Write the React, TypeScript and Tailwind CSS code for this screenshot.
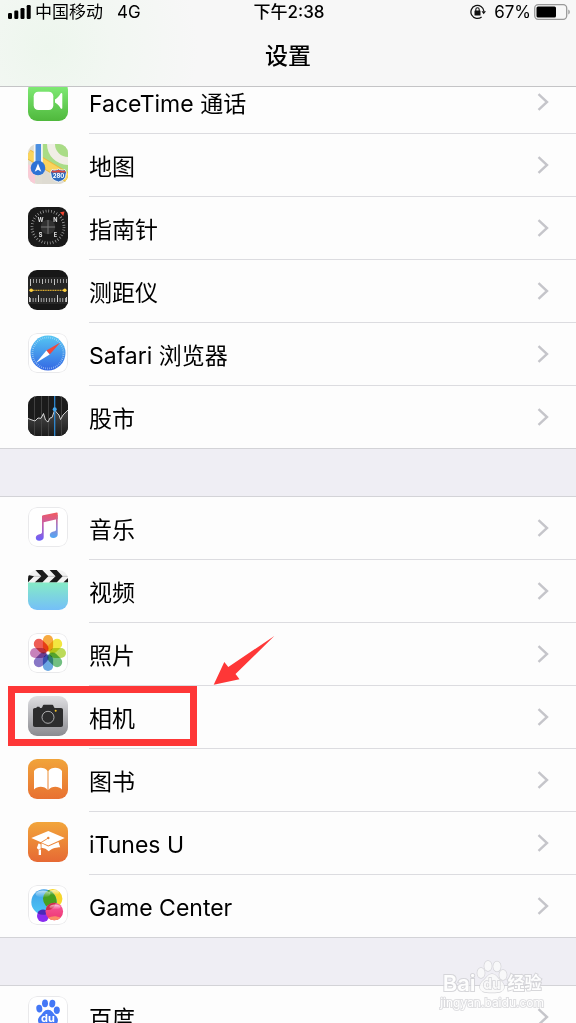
import React from 'react';

function Tile({ children, outlined }: { children: React.ReactNode; outlined?: boolean }) {
    return (
        <span className={`relative block w-10 h-10 shrink-0 rounded-[9px] overflow-hidden ${outlined ? 'bg-white' : ''}`}>
            <svg className="block w-10 h-10" viewBox="0 0 40 40" fill="none" aria-hidden="true">
                {children}
                {outlined && <rect x="0.5" y="0.5" width="39" height="39" rx="8.5" stroke="#e9e9eb" />}
            </svg>
        </span>
    );
}

function Gradient({ id, from, to }: { id: string; from: string; to: string }) {
    return (
        <linearGradient id={id} x1="0" y1="0" x2="0" y2="1">
            <stop stopColor={from} />
            <stop offset="1" stopColor={to} />
        </linearGradient>
    );
}

function FaceTimeIcon() {
    return (
        <Tile>
            <Gradient id="facetime" from="#86f17d" to="#4fb83c" />
            <rect width="40" height="40" fill="url(#facetime)" />
            <rect x="5.7" y="10.8" width="19.6" height="18.2" rx="4.5" fill="#fff" />
            <path d="M27 18.4c2.6-1.3 4.3-3.6 5.6-5.8.5-.9 1.7-.6 1.7.4v13.9c0 1-1.2 1.3-1.7.4-1.3-2.3-3-4.5-5.6-5.8z" fill="#fff" />
        </Tile>
    );
}

function MapsIcon() {
    return (
        <Tile>
            <rect width="40" height="40" fill="#e0ddd3" />
            <path d="M14 0h26v40L14 20z" fill="#a9dc86" />
            <circle cx="40" cy="0" r="17" stroke="#f0eee6" strokeWidth="8" />
            <path d="M0 20l7 5v15H0z" fill="#f9ccd6" />
            <path d="M0 10l42 25" stroke="#edb93e" strokeWidth="10" />
            <path d="M0 10l42 25" stroke="#fad45d" strokeWidth="8" />
            <path d="M14 25l20 15H14z" fill="#dedbd2" />
            <path d="M10.3 0v22" stroke="#f7f7f3" strokeWidth="9" />
            <path d="M10.3 0v22" stroke="#4c8fe0" strokeWidth="5.5" />
            <circle cx="10" cy="24" r="7.3" fill="#2e73d5" />
            <path d="M10 19.5l3.3 8.2-3.3-2-3.3 2z" fill="#fff" />
            <path d="M24 25.5c2 1 4 .8 6.5-.5 2.5 1.300 4.500 1.500 6.500.5l1.500 3c-1.500 4 .5 7-8 9.500-8.500-2.500-6.500-5.500-8-9.500z" fill="#2c69bd" stroke="#fff" strokeWidth=".8" />
            <path d="M24.200 26.200c2 1 4 .8 6.300-.4 2.300 1.200 4.300 1.400 6.300.4l.9 2.200H23.300z" fill="#d8483f" />
            <text x="30.5" y="34" textAnchor="middle" fontSize="6" fontWeight="700" fill="#fff" fontFamily="Inter, sans-serif">280</text>
        </Tile>
    );
}

function CompassIcon() {
    return (
        <Tile>
            <rect width="40" height="40" fill="#1a1a1a" />
            <circle cx="20" cy="20" r="16" stroke="#a8a8a8" strokeWidth="2.8" strokeDasharray=".7 2.09" />
            <circle cx="20" cy="20" r="7.3" fill="#303030" />
            <path d="M20 13v14M13 20h14" stroke="#777" />
            <path d="M32 5.3l4.500-.8-1.200 4.500z" fill="#f2452f" />
            <g fill="#e4e4e4" fontSize="5.5" fontWeight="700" fontFamily="Inter, sans-serif" textAnchor="middle">
                <text x="12.7" y="15">W</text>
                <text x="27.3" y="15">N</text>
                <text x="12.5" y="30">S</text>
                <text x="27.3" y="30">E</text>
            </g>
        </Tile>
    );
}

function MeasureIcon() {
    return (
        <Tile>
            <rect width="40" height="40" fill="#171717" />
            <rect y="7" width="40" height="27" fill="#262626" />
            <path d="M2.5 9v7M26.5 9v6M14.5 9v5" stroke="#ddd" strokeWidth=".9" />
            <path d="M5 11h34" stroke="#bbb" strokeWidth="4" strokeDasharray=".8 2.2" />
            <path d="M2 30h37" stroke="#ccc" strokeWidth="4" strokeDasharray=".8 1.9" />
            <path d="M10.5 25v7M29.5 25v7M1.5 27v5M38.5 27v5" stroke="#ddd" strokeWidth=".9" />
            <path d="M3 20.3h34" stroke="#d7a92f" strokeWidth="1.2" strokeDasharray="1.2 .5" />
            <circle cx="3.2" cy="20.3" r="1.8" fill="#ffd23e" />
            <circle cx="36.8" cy="20.3" r="1.8" fill="#ffd23e" />
        </Tile>
    );
}

function SafariIcon() {
    return (
        <Tile outlined>
            <Gradient id="safari" from="#55c6f3" to="#3467e4" />
            <circle cx="20" cy="20" r="17.5" fill="url(#safari)" />
            <circle cx="20" cy="20" r="15.5" stroke="#cfe9fb" strokeOpacity=".75" strokeWidth="1.8" strokeDasharray=".6 1.43" />
            <path d="M32.3 9.5L18.4 17.6l3.3 4z" fill="#f0483e" />
            <path d="M7.9 30L18.4 17.6l3.3 4z" fill="#fff" />
        </Tile>
    );
}

function StocksIcon() {
    return (
        <Tile>
            <Gradient id="stocks" from="#4a4a4a" to="#1b1b1b" />
            <rect width="40" height="40" fill="#1b1b1b" />
            <path d="M0 22.5L4 24l3 1 3-3 3 .3 2.5-4.8 2 6.5 2.5 2 2-4 2-.5 2.7-7.5 2.3 3 2 2 1.500 4.500L35 19l5-5v26H0z" fill="url(#stocks)" />
            <path d="M6.5 0v40M13.5 0v40M20.5 0v40M33.5 0v40" stroke="#4a4a4a" strokeWidth=".8" />
            <path d="M0 22.5L4 24l3 1 3-3 3 .3 2.5-4.8 2 6.5 2.5 2 2-4 2-.5 2.7-7.5 2.3 3 2 2 1.500 4.500L35 19l5-5" stroke="#e3e3e3" strokeWidth=".9" />
            <path d="M26.7 0v40" stroke="#2f8fdd" strokeWidth="1.2" />
            <circle cx="26.7" cy="13.3" r="2" fill="#46a8f0" />
        </Tile>
    );
}

function MusicIcon() {
    return (
        <Tile outlined>
            <linearGradient id="music" gradientUnits="userSpaceOnUse" x1="23" y1="6" x2="19" y2="34">
                <stop stopColor="#f05a63" />
                <stop offset=".45" stopColor="#c45fae" />
                <stop offset="1" stopColor="#6d60f8" />
            </linearGradient>
            <linearGradient id="musicRight" gradientUnits="userSpaceOnUse" x1="28" y1="6" x2="26" y2="31">
                <stop stopColor="#f05a63" />
                <stop offset=".5" stopColor="#a27cc9" />
                <stop offset="1" stopColor="#4fa8f5" />
            </linearGradient>
            <path d="M14 9.5c0-.7.3-1 1-1.2l13.7-2.7c.7-.1 1 .2 1 .8V12l-14 3.3v15c0 2.2-2 3.5-4.6 3.5-2 0-3.3-1.2-3.3-3 0-2 1.5-3.2 3.7-3.6 1.7-.3 2.5-.7 2.5-2z" fill="url(#music)" />
            <path d="M28 8h1.7v19.5c0 2.1-1.9 3.4-4.4 3.4-2.1 0-3.5-1.1-3.5-3 0-2 1.5-3.1 3.7-3.5 1.7-.3 2.5-.7 2.5-2z" fill="url(#musicRight)" />
        </Tile>
    );
}

function VideosIcon() {
    return (
        <Tile>
            <Gradient id="videos" from="#85ebc6" to="#74bff8" />
            <rect width="40" height="13" fill="#f1f1f1" />
            <path d="M0 6.3h40" stroke="#aaa" strokeWidth=".7" />
            <path d="M7.3 0h7l6 6.3-6 6.2H6.7l6.6-6.2zM21.6 0h7l6 6.3-6 6.2H21l6.6-6.2zM0 5l6 1.3-6 6zM35.3 12.5L40 8v4.5z" fill="#1a1a1a" />
            <rect y="12.5" width="40" height="27.5" fill="url(#videos)" />
        </Tile>
    );
}

const PETALS = ['#f6a12c', '#f2e32b', '#b5d748', '#63b873', '#5c9fe0', '#7b68c0', '#c274b4', '#ec4b43'];

function PhotosIcon() {
    return (
        <Tile outlined>
            {PETALS.map((color, i) => (
                <rect
                    key={color}
                    x="14.9"
                    y="2"
                    width="10.2"
                    height="16.6"
                    rx="5.1"
                    fill={color}
                    fillOpacity=".9"
                    transform={`rotate(${i * 45} 20 20)`}
                    className="mix-blend-multiply"
                />
            ))}
            <circle cx="20" cy="20" r="1.3" fill="#fff" />
        </Tile>
    );
}

function CameraIcon() {
    return (
        <Tile>
            <Gradient id="camera" from="#dfdfe2" to="#8b8b90" />
            <rect width="40" height="40" fill="url(#camera)" />
            <path d="M8.5 12v-.7c0-.4.3-.6.7-.6h1.9c.4 0 .7.2.7.6v.7h1c.8 0 1.2-.4 1.5-1.1l.5-1.2c.3-.7.7-1 1.5-1h7.6c.8 0 1.2.3 1.5 1l.5 1.2c.3.7.7 1.1 1.5 1.1H33c1.3 0 2 .7 2 2v15c0 1.3-.7 2-2 2H7c-1.3 0-2-.7-2-2V14c0-1.3.7-2 2-2z" fill="#2c2c2d" />
            <circle cx="20" cy="21.3" r="6" stroke="#b9b9bb" strokeWidth=".9" />
            <circle cx="27.7" cy="14.8" r="1" fill="#f4c026" />
        </Tile>
    );
}

function BooksIcon() {
    return (
        <Tile>
            <Gradient id="books" from="#f1a43a" to="#e87132" />
            <rect width="40" height="40" fill="url(#books)" />
            <path d="M6 12c1.5-2.2 4-3.2 6.7-3.2 2.8 0 5.5 1.2 6.8 3.2v19c-1.5-2.300-4-3.300-6.800-3.300-2.600 0-5 1-6.700 2.800zM34 12c-1.500-2.200-4-3.200-6.700-3.200-2.800 0-5.500 1.200-6.800 3.200v19c1.500-2.300 4-3.300 6.800-3.300 2.600 0 5 1 6.700 2.800z" fill="#fff" />
        </Tile>
    );
}

function ITunesUIcon() {
    return (
        <Tile>
            <Gradient id="itunesu" from="#f2a53b" to="#e66934" />
            <rect width="40" height="40" fill="url(#itunesu)" />
            <path d="M20.3 9L36.7 16 20.3 23.5 3.3 16z" fill="#fff" />
            <path d="M13.5 21.3l6.8 3.2 10.2-4.6 1.7 5.3c-3 .1-8 .8-11.500 4-2-2-4.200-3.200-7.200-3.500z" fill="#fff" />
            <path d="M20.3 16l-8.5 5.3V26" stroke="#ea8538" strokeWidth=".9" />
            <circle cx="20.3" cy="16" r="1.2" fill="#ea8538" />
            <path d="M10.5 21.5l2 .5.3 4.5-2.5 1-1.5-1.5zM10.700 27.500h2.300V33h-2.300z" fill="#fff" />
        </Tile>
    );
}

function GameCenterIcon() {
    return (
        <Tile outlined>
            <Gradient id="gcBlue" from="#3f9fe6" to="#4cc8f7" />
            <Gradient id="gcPink" from="#f55b9d" to="#ef3470" />
            <Gradient id="gcShine" from="#ffffffaa" to="#ffffff00" />
            <clipPath id="gcOverlap">
                <circle cx="16" cy="17" r="12.7" />
            </clipPath>
            <circle cx="24.7" cy="13.8" r="9.7" fill="#f6d62c" />
            <circle cx="16" cy="17" r="12.7" fill="url(#gcBlue)" />
            <circle cx="24.7" cy="13.8" r="9.7" fill="#47a01f" clipPath="url(#gcOverlap)" />
            <circle cx="15" cy="31" r="6" fill="#8a2cf0" />
            <path d="M9.5 28.2a6 6 0 0 1 11 0c-3.5 2-7.5 2-11 0z" fill="#4a28b8" />
            <circle cx="26.3" cy="26.5" r="8.8" fill="url(#gcPink)" />
            <path d="M20 32.7a8.800 8.800 0 0 0 12.600 0c-4-2-8.600-2-12.600 0z" fill="#fb8a68" />
            <path d="M17.700 25a8.800 8.800 0 0 1 10-7.200c-.5 4-4 8-10 7.200z" fill="#cf2b4c" />
            <ellipse cx="15" cy="9" rx="7.5" ry="3.5" fill="url(#gcShine)" />
            <ellipse cx="26" cy="7.5" rx="5" ry="2.5" fill="url(#gcShine)" />
            <ellipse cx="27" cy="22" rx="5.5" ry="2.5" fill="url(#gcShine)" />
        </Tile>
    );
}

function BaiduIcon() {
    return (
        <Tile outlined>
            <g fill="#4478f6">
                <ellipse cx="11.3" cy="12.7" rx="3" ry="3.9" transform="rotate(-8 11.3 12.7)" />
                <ellipse cx="17" cy="7.3" rx="3" ry="3.9" />
                <ellipse cx="24.3" cy="7.6" rx="3" ry="3.9" transform="rotate(8 24.3 7.6)" />
                <ellipse cx="28.8" cy="14.3" rx="3" ry="3.7" />
                <path d="M20 13.7c4 0 5 3.300 7.300 5.600 1.900 1.900 3 3.400 2.500 6-.5 3-3 4.500-9.800 4.500s-9.500-1.500-9.900-4.500c-.4-2.600.8-4.100 2.700-6 2.300-2.300 3.200-5.600 7.200-5.600z" />
            </g>
            <text x="20" y="26" textAnchor="middle" fontSize="11" fontWeight="700" fill="#fff" fontFamily="Inter, sans-serif">du</text>
        </Tile>
    );
}

function SignalBars() {
    return (
        <svg className="w-6 h-4" viewBox="0 0 24 16" fill="#000" aria-label="信号">
            <rect x="0" y="9" width="4" height="6" rx="1.2" />
            <rect x="6.3" y="6.5" width="4" height="8.5" rx="1.2" />
            <rect x="12.5" y="4" width="4" height="11" rx="1.2" />
            <rect x="18.7" y="1" width="4" height="14" rx="1.2" />
        </svg>
    );
}

function RotationLock() {
    return (
        <svg className="w-4 h-4" viewBox="0 0 16 16" fill="none" aria-label="方向锁定">
            <path d="M11.6 12.9A6.5 6.5 0 1 1 13.9 7.3" stroke="#111" strokeWidth="1.3" />
            <path d="M11.5 7.3H16l-2.3 2.9z" fill="#111" />
            <rect x="4.5" y="6.6" width="6" height="4.8" rx=".5" fill="#111" />
            <path d="M5.8 7V5.5a1.7 1.7 0 0 1 3.4 0V7" stroke="#111" strokeWidth="1.1" />
        </svg>
    );
}

function Battery() {
    return (
        <svg className="w-9 h-4" viewBox="0 0 36 16" fill="none" aria-label="电池">
            <rect x=".7" y=".7" width="32" height="14.6" rx="3.5" stroke="#999" strokeWidth="1.3" />
            <rect x="2.5" y="2.5" width="19.5" height="11" rx="1.5" fill="#000" />
            <path d="M34.3 5.5c1 .4 1.5 1.3 1.5 2.5s-.5 2.1-1.5 2.5z" fill="#999" />
        </svg>
    );
}

type Item = { label: string; Icon: () => React.ReactElement; marked?: boolean };

const GROUPS: Item[][] = [
    [
        { label: 'FaceTime 通话', Icon: FaceTimeIcon },
        { label: '地图', Icon: MapsIcon },
        { label: '指南针', Icon: CompassIcon },
        { label: '测距仪', Icon: MeasureIcon },
        { label: 'Safari 浏览器', Icon: SafariIcon },
        { label: '股市', Icon: StocksIcon },
    ],
    [
        { label: '音乐', Icon: MusicIcon },
        { label: '视频', Icon: VideosIcon },
        { label: '照片', Icon: PhotosIcon },
        { label: '相机', Icon: CameraIcon, marked: true },
        { label: '图书', Icon: BooksIcon },
        { label: 'iTunes U', Icon: ITunesUIcon },
        { label: 'Game Center', Icon: GameCenterIcon },
    ],
    [{ label: '百度', Icon: BaiduIcon }],
];

function Row({ label, Icon, marked }: Item) {
    return (
        <li className="group relative">
            <a href="#" className="flex h-[63px] items-stretch pl-7">
                <span className="flex items-center pr-[21px] pb-1">
                    <Icon />
                </span>
                <span className="flex flex-1 items-center justify-between border-b border-[#dcdce0] pr-[27px] group-last:border-transparent">
                    <span className="pt-1 text-[23px] leading-8">{label}</span>
                    <svg className="w-3 h-[18px]" viewBox="0 0 12 18" fill="none" stroke="#c5c5ca" strokeWidth="2.4" aria-hidden="true">
                        <path d="M1.5 1.2L10 9l-8.5 7.8" />
                    </svg>
                </span>
            </a>
            {marked && (
                <>
                    <span className="absolute left-2 top-0 h-[60px] w-[189px] border-[7px] border-[#fe3737] pointer-events-none" />
                    <svg className="absolute left-[213px] -top-[51px] z-10 w-16 h-[51px] pointer-events-none" viewBox="0 0 64 51" fill="#fe3737" aria-hidden="true">
                        <path d="M.7 49.7L11.3 27l4 5L61.3 1 22.5 39l4 5.3z" />
                    </svg>
                </>
            )}
        </li>
    );
}

function Watermark() {
    return (
        <div className="absolute bottom-3 right-8 flex flex-col items-center text-white pointer-events-none [-webkit-text-stroke:2px_#d3d3d7] [paint-order:stroke_fill] opacity-90">
            <div className="flex items-end h-9">
                <span className="text-[22px] font-semibold leading-6">Bai</span>
                <svg className="w-8 h-9" viewBox="0 0 32 36" fill="#fafafa" stroke="#d0d0d4" strokeWidth="1.3" aria-hidden="true">
                    <ellipse cx="5" cy="14" rx="3.7" ry="5" />
                    <ellipse cx="12" cy="7" rx="3.7" ry="5" />
                    <ellipse cx="21" cy="7.5" rx="3.7" ry="5" />
                    <ellipse cx="27" cy="16" rx="3.7" ry="5" />
                    <path d="M16 15c4 0 5 3.5 8 6 3.5 3 4.5 5 4 8-.6 3.5-4 4.5-12 4.5S4.600 32.500 4 29c-.5-3 .5-5 4-8 3-2.500 4-6 8-6z" />
                    <text x="16" y="30" textAnchor="middle" fontSize="14" fontWeight="700">du</text>
                </svg>
                <span className="text-[17px] font-semibold leading-6">经验</span>
            </div>
            <span className="text-xs leading-4 [-webkit-text-stroke:2px_#dcdcdf]">jingyan.baidu.com</span>
        </div>
    );
}

export default function App() {
    return (
        <div className="relative flex h-screen flex-col overflow-hidden bg-[#efeef4] text-black font-['Inter','Noto_Sans_CJK_SC',sans-serif]">
            <header className="relative z-10 flex h-[87px] shrink-0 flex-col border-b border-[#c4c4c6] bg-[#f7f7f7] bg-[radial-gradient(circle_at_48px_48px,#edf6ed_0,#f2f7f2_64px,#f7f7f7_150px)]">
                <div className="grid grid-cols-[1fr_auto_1fr] items-center pl-2 pr-1.5 text-[17px] leading-6">
                    <div className="flex items-center">
                        <SignalBars />
                        <span className="ml-[3px]">中国移动</span>
                        <span className="ml-3.5">4G</span>
                    </div>
                    <time className="font-medium">下午2:38</time>
                    <div className="flex items-center justify-end">
                        <RotationLock />
                        <span className="ml-2 mr-[3px]">67%</span>
                        <Battery />
                    </div>
                </div>
                <h1 className="mt-4 text-center text-[23px] font-medium leading-8">设置</h1>
            </header>

            {/* the list is scrolled a little way under the header */}
            <main className="-mt-4 flex flex-col gap-[47px]">
                {GROUPS.map((items, i) => (
                    <ul key={i} className={`bg-[#fdfdfd] ${i > 0 ? 'border-t border-[#d3d3d7]' : ''} relative after:absolute after:inset-x-0 after:bottom-0 after:h-px after:bg-[#d3d3d7]`}>
                        {items.map((item) => (
                            <Row key={item.label} {...item} />
                        ))}
                    </ul>
                ))}
            </main>

            <Watermark />
        </div>
    );
}
